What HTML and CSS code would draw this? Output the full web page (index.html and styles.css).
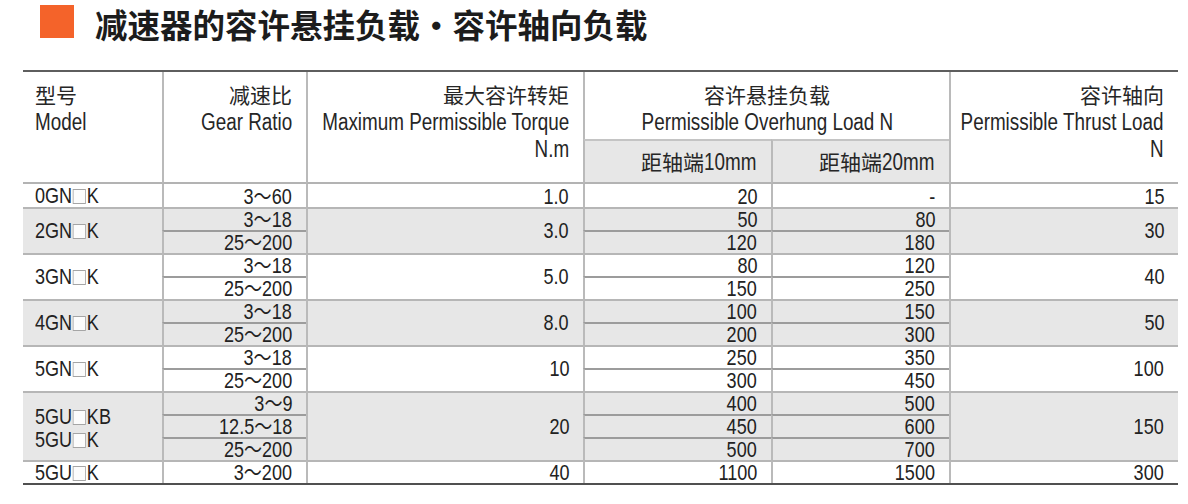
FILE: index.html
```html
<!DOCTYPE html>
<html lang="zh">
<head>
<meta charset="utf-8">
<link rel="stylesheet" href="styles.css">
</head>
<body>
<div class="page">
  <h1 class="title"><span class="mark"></span><span class="title-text">减速器的容许悬挂负载・容许轴向负载</span></h1>
  <table class="spec">
    <colgroup>
      <col class="c-model"><col class="c-ratio"><col class="c-torque"><col class="c-l10"><col class="c-l20"><col class="c-thrust">
    </colgroup>
    <thead>
      <tr class="h1">
        <th rowspan="2" class="left">型号<br><span class="n">Model</span></th>
        <th rowspan="2">减速比<br><span class="n">Gear Ratio</span></th>
        <th rowspan="2">最大容许转矩<br><span class="n">Maximum Permissible Torque</span><br><span class="n">N.m</span></th>
        <th colspan="2" class="center">容许悬挂负载<br><span class="n">Permissible Overhung Load N</span></th>
        <th rowspan="2">容许轴向<br><span class="n">Permissible Thrust Load</span><br><span class="n">N</span></th>
      </tr>
      <tr class="h2">
        <th class="sub">距轴端<span class="n">10mm</span></th>
        <th class="sub">距轴端<span class="n">20mm</span></th>
      </tr>
    </thead>
    <tbody class="g white first">
      <tr><td class="model"><span class="n">0GN<i class="box"></i>K</span></td><td><span class="n">3～60</span></td><td><span class="n">1.0</span></td><td><span class="n">20</span></td><td><span class="n">-</span></td><td><span class="n">15</span></td></tr>
    </tbody>
    <tbody class="g gray">
      <tr><td rowspan="2" class="model"><span class="n">2GN<i class="box"></i>K</span></td><td><span class="n">3～18</span></td><td rowspan="2" class="mid"><span class="n">3.0</span></td><td><span class="n">50</span></td><td><span class="n">80</span></td><td rowspan="2" class="mid"><span class="n">30</span></td></tr>
      <tr class="s"><td><span class="n">25～200</span></td><td><span class="n">120</span></td><td><span class="n">180</span></td></tr>
    </tbody>
    <tbody class="g white">
      <tr><td rowspan="2" class="model"><span class="n">3GN<i class="box"></i>K</span></td><td><span class="n">3～18</span></td><td rowspan="2" class="mid"><span class="n">5.0</span></td><td><span class="n">80</span></td><td><span class="n">120</span></td><td rowspan="2" class="mid"><span class="n">40</span></td></tr>
      <tr class="s"><td><span class="n">25～200</span></td><td><span class="n">150</span></td><td><span class="n">250</span></td></tr>
    </tbody>
    <tbody class="g gray">
      <tr><td rowspan="2" class="model"><span class="n">4GN<i class="box"></i>K</span></td><td><span class="n">3～18</span></td><td rowspan="2" class="mid"><span class="n">8.0</span></td><td><span class="n">100</span></td><td><span class="n">150</span></td><td rowspan="2" class="mid"><span class="n">50</span></td></tr>
      <tr class="s"><td><span class="n">25～200</span></td><td><span class="n">200</span></td><td><span class="n">300</span></td></tr>
    </tbody>
    <tbody class="g white">
      <tr><td rowspan="2" class="model"><span class="n">5GN<i class="box"></i>K</span></td><td><span class="n">3～18</span></td><td rowspan="2" class="mid"><span class="n">10</span></td><td><span class="n">250</span></td><td><span class="n">350</span></td><td rowspan="2" class="mid"><span class="n">100</span></td></tr>
      <tr class="s"><td><span class="n">25～200</span></td><td><span class="n">300</span></td><td><span class="n">450</span></td></tr>
    </tbody>
    <tbody class="g gray">
      <tr><td rowspan="3" class="model two"><span class="n">5GU<i class="box"></i>KB<br>5GU<i class="box"></i>K</span></td><td><span class="n">3～9</span></td><td rowspan="3" class="mid"><span class="n">20</span></td><td><span class="n">400</span></td><td><span class="n">500</span></td><td rowspan="3" class="mid"><span class="n">150</span></td></tr>
      <tr class="s"><td><span class="n">12.5～18</span></td><td><span class="n">450</span></td><td><span class="n">600</span></td></tr>
      <tr class="s"><td><span class="n">25～200</span></td><td><span class="n">500</span></td><td><span class="n">700</span></td></tr>
    </tbody>
    <tbody class="g white">
      <tr><td class="model"><span class="n">5GU<i class="box"></i>K</span></td><td><span class="n">3～200</span></td><td><span class="n">40</span></td><td><span class="n">1100</span></td><td><span class="n">1500</span></td><td><span class="n">300</span></td></tr>
    </tbody>
  </table>
</div>
</body>
</html>
```

FILE: styles.css
```css
html, body {
  margin: 0;
  padding: 0;
  background: #ffffff;
}

.page {
  width: 1188px;
  height: 504px;
  overflow: hidden;
  padding: 0 10px 0 23px;
  box-sizing: border-box;
}

.title {
  margin: 0;
  height: 70px;
  display: flex;
  align-items: flex-start;
  padding: 0 0 0 17px;
  box-sizing: border-box;
  gap: 21px;
  font-family: "Noto Sans CJK SC", sans-serif;
  font-weight: 700;
  font-size: 32.5px;
  line-height: 47px;
  color: #1c1c1c;
}

.mark {
  display: block;
  flex: none;
  width: 34px;
  height: 33px;
  margin-top: 5px;
  background: #f4632a;
}

.title-text {
  display: block;
}

.spec {
  width: 1155px;
  border-collapse: separate;
  border-spacing: 0;
  table-layout: fixed;
  font-family: "Liberation Sans", "Noto Sans CJK SC", sans-serif;
  font-size: 22px;
  color: #222222;
  border-top: 2px solid #5e5e5e;
  border-bottom: 2px solid #505050;
}

.c-model { width: 139px; }
.c-ratio { width: 144px; }
.c-torque { width: 277px; }
.c-l10 { width: 188px; }
.c-l20 { width: 178px; }
.c-thrust { width: 229px; }

th, td {
  box-sizing: border-box;
  padding: 0 14px 0 0;
  text-align: right;
  border-left: 2px solid #bababa;
  white-space: nowrap;
}

th:first-child, td:first-child {
  border-left: none;
}

.n {
  display: inline-block;
  transform: scaleX(0.82);
  transform-origin: 100% 50%;
}

th {
  font-weight: normal;
  vertical-align: top;
  line-height: 26px;
  padding-top: 11px;
  font-size: 21px;
  color: #262626;
}

th .n {
  font-size: 23px;
  margin-left: -60px;
}

.spec thead .h1 th {
  height: 67px;
}

.spec thead .h2 th {
  height: 45px;
}

.spec thead th[rowspan] {
  border-bottom: 2px solid #b3b3b3;
}

th.left {
  text-align: left;
  padding-left: 12px;
}

th.left .n {
  transform-origin: 0 50%;
  margin-left: 0;
}

th.center {
  text-align: center;
  padding-right: 0;
}

th.center .n {
  transform-origin: 50% 50%;
  margin-left: 0;
}

th.sub {
  background: #e7e7e7;
  border-top: 2px solid #c4c4c4;
  border-bottom: 2px solid #b3b3b3;
  vertical-align: middle;
  padding-top: 2px;
}

th.sub .n {
  transform-origin: 0 50%;
  margin-left: 0;
  margin-right: -11px;
}

.spec thead .h2 th.sub:first-child {
  border-left: 2px solid #bababa;
}

td {
  height: 23px;
  line-height: 20px;
  vertical-align: bottom;
}

.g tr:first-child td {
  border-top: 2px solid #b6b6b6;
}

.g.first tr:first-child td {
  border-top: none;
}

.g tr.s td {
  border-top: 2px solid #9c9c9c;
}

.g tr.s td:first-child {
  border-left: 2px solid #bababa;
}

td.model {
  text-align: left;
  padding-left: 12px;
  vertical-align: middle;
}

td.model .n {
  transform-origin: 0 50%;
}

td.model.two {
  line-height: 23px;
  padding-top: 2px;
}

td.mid {
  vertical-align: middle;
}

.gray td {
  background: #e7e7e7;
}

.box {
  display: inline-block;
  width: 16px;
  height: 15px;
  border: 1px solid #a5a5a5;
  background: #fcfcfc;
  margin: 0 1px;
  vertical-align: -1px;
  box-sizing: border-box;
}
```
